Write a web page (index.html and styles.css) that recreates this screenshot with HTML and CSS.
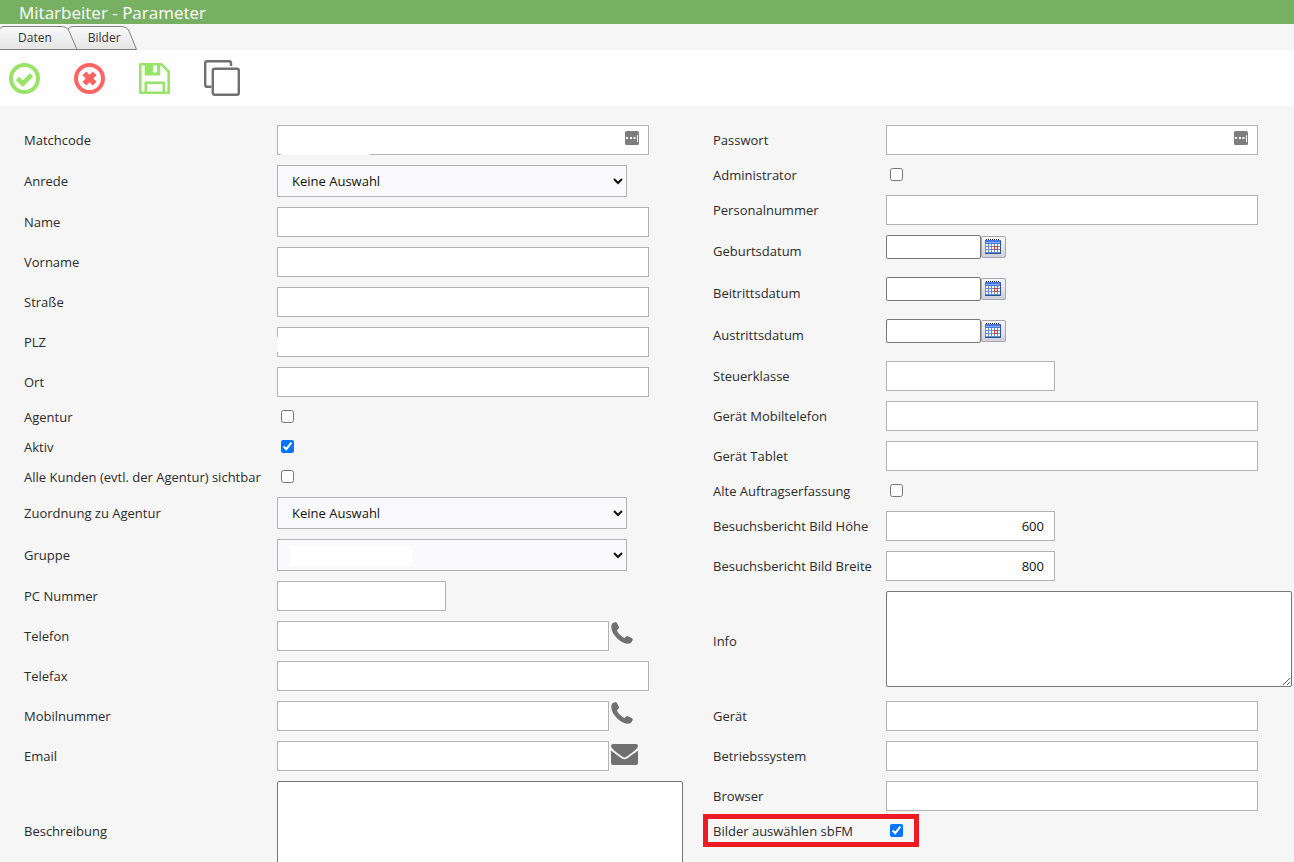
FILE: index.html
```html
<!DOCTYPE html>
<html lang="de">
<head>
<meta charset="utf-8">
<title>Mitarbeiter - Parameter</title>
<link rel="stylesheet" href="styles.css">
</head>
<body>
<svg class="defs" aria-hidden="true">
  <symbol id="phone" viewBox="0 0 22 22"><path d="M1.200 1.500C2.600 .3 4.600 0 5.700 .4L8 5.300C8 6.600 6.500 7.400 5.800 8.500C7.300 11.700 10 14.300 13.400 16C14.300 15.300 15.200 13.900 16.500 13.900L21.500 16.500C22 17.900 21.300 19.800 19.800 20.800C17.900 22 15.300 21.900 12.900 20.800C7.600 18.400 3.300 14 1.100 8.900C0 6.200 0 3.300 1.200 1.500Z" fill="#707070"/></symbol>
  <symbol id="dots" viewBox="0 0 14 14"><rect width="14" height="14" rx="1.500" fill="#7d7d7d"/><path d="M1 6h2v2H1zM5 6h2v2H5zM8.500 6h2v2h-2zM12 4h1v7h-1z" fill="#fff"/></symbol>
  <symbol id="calendar" viewBox="0 0 16 15"><path d="M0 1h16v14H0z" fill="#668fce"/><path d="M0 1h16v4H0z" fill="#4478e0"/><path d="M1 3h14v1H1z" fill="#8db0f5"/><path d="M1 .5h14" stroke="#222" stroke-dasharray="1 1"/><path d="M1 5h2v2H1zm3 0h2v2H4zm3 0h2v2H7zm3 0h2v2h-2zm3 0h2v2h-2zM1 8h2v2H1zm3 0h2v2H4zm3 0h2v2H7zm6 0h2v2h-2zM1 11h2v2H1zm3 0h2v2H4zm3 0h2v2H7zm3 0h2v2h-2zm3 0h2v2h-2z" fill="#fff"/><path d="M0 14.500h15.500V2" fill="none" stroke="#29548c"/><path d="M9.500 7.500h3v3h-3z" fill="#fff" stroke="#dc3212"/></symbol>
</svg>
<header class="title-bar"><h1>Mitarbeiter - Parameter</h1></header>
<nav class="tabs">
  <svg class="tab-shapes" width="137" height="26" viewBox="0 0 137 26" aria-hidden="true">
    <defs><linearGradient id="tab" x2="0" y2="1"><stop stop-color="#fafafa"/><stop offset="1" stop-color="#e4e4e4"/></linearGradient></defs>
    <path d="M68 25.500V5Q70 2.500 73 2.500H121Q127 2.500 129 7L136.500 25.500Z" fill="url(#tab)" stroke="#808080"/>
    <path d="M-1 25.500V7Q0 2.500 4 2.500H61Q67 2.500 69 7L77 25.500Z" fill="url(#tab)" stroke="#808080"/>
  </svg>
  <a class="tab" href="#daten">Daten</a>
  <a class="tab" href="#bilder">Bilder</a>
</nav>
<div class="toolbar">
  <button class="tool" aria-label="Übernehmen"><svg width="31" height="31" viewBox="0 0 31 31"><circle cx="15.500" cy="15.500" r="13.500" fill="none" stroke="#98e466" stroke-width="4"/><path d="M8.500 15.500l5.300 5.200 8.800-8.800" fill="none" stroke="#98e466" stroke-width="4.600"/></svg></button>
  <button class="tool" aria-label="Abbrechen"><svg width="31" height="31" viewBox="0 0 31 31"><circle cx="15.500" cy="15.500" r="13.500" fill="none" stroke="#ff6464" stroke-width="4"/><path d="M10.300 10.300l10.400 10.400M20.700 10.300L10.300 20.700" stroke="#ff6464" stroke-width="5.400"/></svg></button>
  <button class="tool" aria-label="Speichern"><svg width="31" height="31" viewBox="0 0 31 31" fill="none" stroke="#98e466" stroke-width="2.600" stroke-linejoin="round"><path d="M1.300 1.300H22.500L29.700 8.500V29.700H1.300Z"/><path d="M7 1.500V11.300H20V1.500M6.800 29.500V19.800H24.800V29.500"/><path d="M7 2h7v9H7zM18 2h2v9h-2zM14 9.500h5V11h-5z" fill="#98e466" stroke="none"/></svg></button>
  <button class="tool" aria-label="Kopieren"><svg width="36" height="36" viewBox="0 0 36 36" fill="none" stroke="#707070" stroke-width="2.400"><path d="M7.500 26.800H3.200Q1.200 26.800 1.200 24.800V3.200Q1.200 1.200 3.200 1.200H25Q27 1.200 27 3.200V6"/><rect x="8.800" y="8.800" width="26" height="26" rx="2"/></svg></button>
</div>
<main>
<form class="form">
  <div class="column column-left">
    <div class="row"><label for="matchcode">Matchcode</label><div class="field"><input class="text wide" id="matchcode"><span class="cover cover-bottom"></span><svg class="dots"><use href="#dots"/></svg></div></div>
    <div class="row tall"><label for="anrede">Anrede</label><select id="anrede"><option>Keine Auswahl</option></select></div>
    <div class="row"><label for="name">Name</label><input class="text wide" id="name"></div>
    <div class="row"><label for="vorname">Vorname</label><input class="text wide" id="vorname"></div>
    <div class="row"><label for="strasse">Straße</label><input class="text wide" id="strasse"></div>
    <div class="row"><label for="plz">PLZ</label><div class="field"><input class="text wide" id="plz"><span class="cover cover-side"></span></div></div>
    <div class="row"><label for="ort">Ort</label><input class="text wide" id="ort"></div>
    <div class="row short"><label for="agentur">Agentur</label><input type="checkbox" id="agentur"></div>
    <div class="row short"><label for="aktiv">Aktiv</label><input type="checkbox" id="aktiv" checked></div>
    <div class="row short"><label for="alle">Alle Kunden (evtl. der Agentur) sichtbar</label><input type="checkbox" id="alle"></div>
    <div class="row tall"><label for="zuordnung">Zuordnung zu Agentur</label><select id="zuordnung"><option>Keine Auswahl</option></select></div>
    <div class="row tall"><label for="gruppe">Gruppe</label><div class="field"><select id="gruppe"><option></option></select><span class="cover cover-value"></span></div></div>
    <div class="row"><label for="pc">PC Nummer</label><input class="text small" id="pc"></div>
    <div class="row"><label for="telefon">Telefon</label><input class="text medium" id="telefon"><svg class="contact"><use href="#phone"/></svg></div>
    <div class="row"><label for="telefax">Telefax</label><input class="text wide" id="telefax"></div>
    <div class="row"><label for="mobil">Mobilnummer</label><input class="text medium" id="mobil"><svg class="contact"><use href="#phone"/></svg></div>
    <div class="row"><label for="email">Email</label><input class="text medium" id="email"><svg class="mail" viewBox="0 0 27 21"><path d="M2 0H25Q27 0 27 2C27 5 19 10 15.500 12.800Q13.500 14 11.500 12.800C8 10 0 5 0 2Q0 0 2 0ZM0 6.500C4 9.500 7.500 12 10.500 14.200Q13.500 16.500 16.500 14.200C20 11.600 23 9.700 27 6.500V19Q27 21 25 21H2Q0 21 0 19Z" fill="#707070"/></svg></div>
    <div class="row area"><label for="beschreibung">Beschreibung</label><textarea id="beschreibung"></textarea></div>
  </div>
  <div class="column column-right">
    <div class="row"><label for="passwort">Passwort</label><div class="field"><input class="text wide" type="password" id="passwort"><svg class="dots"><use href="#dots"/></svg></div></div>
    <div class="row short"><label for="admin">Administrator</label><input type="checkbox" id="admin"></div>
    <div class="row"><label for="personal">Personalnummer</label><input class="text wide" id="personal"></div>
    <div class="row tall"><label for="geburt">Geburtsdatum</label><input class="date" id="geburt"><button type="button" class="pick" aria-label="Geburtsdatum wählen"><svg><use href="#calendar"/></svg></button></div>
    <div class="row tall"><label for="beitritt">Beitrittsdatum</label><input class="date" id="beitritt"><button type="button" class="pick" aria-label="Beitrittsdatum wählen"><svg><use href="#calendar"/></svg></button></div>
    <div class="row tall"><label for="austritt">Austrittsdatum</label><input class="date" id="austritt"><button type="button" class="pick" aria-label="Austrittsdatum wählen"><svg><use href="#calendar"/></svg></button></div>
    <div class="row"><label for="steuer">Steuerklasse</label><input class="text small" id="steuer"></div>
    <div class="row"><label for="mobilgeraet">Gerät Mobiltelefon</label><input class="text wide" id="mobilgeraet"></div>
    <div class="row"><label for="tablet">Gerät Tablet</label><input class="text wide" id="tablet"></div>
    <div class="row short"><label for="alt">Alte Auftragserfassung</label><input type="checkbox" id="alt"></div>
    <div class="row"><label for="hoehe">Besuchsbericht Bild Höhe</label><input class="text small number" id="hoehe" value="600"></div>
    <div class="row"><label for="breite">Besuchsbericht Bild Breite</label><input class="text small number" id="breite" value="800"></div>
    <div class="row area"><label for="info">Info</label><textarea id="info"></textarea></div>
    <div class="row"><label for="geraet">Gerät</label><input class="text wide" id="geraet"></div>
    <div class="row"><label for="os">Betriebssystem</label><input class="text wide" id="os"></div>
    <div class="row"><label for="browser">Browser</label><input class="text wide" id="browser"></div>
    <div class="row short highlight"><label for="bilder-sbfm">Bilder auswählen sbFM</label><input type="checkbox" id="bilder-sbfm" checked></div>
  </div>
</form>
</main>
</body>
</html>
```
FILE: styles.css
```css
*, *::after { box-sizing: border-box; }
body {
  margin: 0;
  height: 100vh;
  overflow: hidden;
  background: #f6f6f6;
  color: #2b2b2b;
  font: 13px/20px "Open Sans", "Noto Sans", sans-serif;
}
.defs { display: none; }
.title-bar {
  height: 24px;
  padding-left: 19px;
  background: #77af63;
  color: #fff;
}
.title-bar h1 { margin: 0; font-size: 17px; font-weight: 400; line-height: 26px; }
.tabs {
  position: relative;
  display: flex;
  height: 26px;
  padding-left: 18px;
  gap: 36px;
}
.tab-shapes { position: absolute; left: 0; top: 0; }
.tab {
  position: relative;
  color: #333;
  font-size: 12px;
  line-height: 28px;
  text-decoration: none;
}
.toolbar {
  display: flex;
  align-items: center;
  gap: 34px;
  height: 56px;
  padding-left: 9px;
  background: #fefefe;
}
.tool { padding: 0; border: 0; background: none; cursor: pointer; }
.tool svg { display: block; }
.form {
  display: grid;
  grid-template-columns: minmax(0, 689fr) minmax(0, 581fr);
  padding: 19px 0 0 24px;
}
.column { display: flex; flex-direction: column; gap: 10px; }
.row { position: relative; display: flex; align-items: flex-start; min-height: 30px; }
.tall { min-height: 32px; }
.short { min-height: 20px; }
.area { min-height: 100px; }
.row label { flex: none; align-self: center; white-space: nowrap; }
.column-left label { width: 253px; }
.column-right label { width: 173px; }
.field { position: relative; }
input, select, textarea { margin: 0; color: #111; font: inherit; }
.text {
  display: block;
  height: 30px;
  padding: 0 10px;
  border: 1px solid #b3b3b3;
  background: #fff;
}
.wide { width: 372px; }
.medium { width: 332px; }
.small { width: 169px; }
.number { text-align: right; }
select {
  display: block;
  width: 350px;
  height: 32px;
  padding: 0 1px 0 10px;
  border: 1px solid #b3b3b3;
  border-radius: 0;
  background: #fafafc;
}
input[type="checkbox"] { width: 13px; height: 13px; margin: 3px 4px; }
textarea {
  display: block;
  width: 406px;
  height: 96px;
  border: 1px solid #767676;
  border-radius: 2px;
  background: #fff;
}
.date { width: 95px; height: 24px; border: 1px solid #767676; border-radius: 2px; background: #fff; }
.pick {
  display: flex;
  align-items: flex-start;
  width: 25px;
  height: 22px;
  margin-top: 1px;
  padding: 2px 0 0 3px;
  border: 1px solid #a5a5ad;
  border-radius: 2px;
  background: linear-gradient(#f8f8fa, #cfd0dc);
}
.pick svg { width: 16px; height: 15px; }
.dots { position: absolute; right: 10px; top: 6px; width: 14px; height: 14px; }
.contact { width: 22px; height: 22px; margin: 1px 0 0 2px; }
.mail { width: 27px; height: 21px; margin: 3px 0 0 2px; }
.cover { position: absolute; background: #fff; }
.cover-bottom { left: 4px; bottom: 0; width: 89px; height: 1px; }
.cover-side { left: 0; top: 10px; width: 1px; height: 15px; }
.cover-value { left: 13px; top: 7px; width: 123px; height: 20px; }
.highlight::after {
  content: "";
  position: absolute;
  left: -10px;
  top: -7px;
  width: 216px;
  height: 33px;
  border: 5px solid #ed1c24;
  pointer-events: none;
}
```
